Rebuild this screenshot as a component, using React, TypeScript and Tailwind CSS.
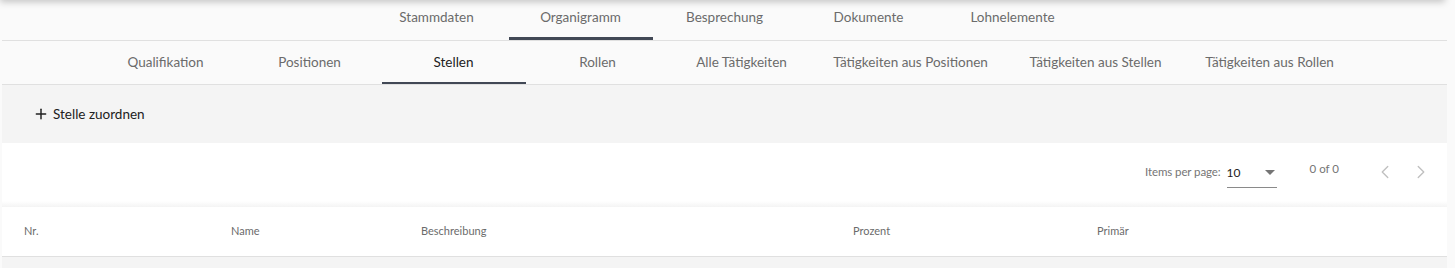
import { ChevronLeft, ChevronRight, Plus } from 'lucide-react'

const topTabs = ['Stammdaten', 'Organigramm', 'Besprechung', 'Dokumente', 'Lohnelemente']
const subTabs = [
  { label: 'Qualifikation', w: 'w-[144px]' },
  { label: 'Positionen', w: 'w-[144px]' },
  { label: 'Stellen', w: 'w-[144px]' },
  { label: 'Rollen', w: 'w-[144px]' },
  { label: 'Alle Tätigkeiten', w: 'w-[144px]' },
  { label: 'Tätigkeiten aus Positionen', w: 'w-[194px]' },
  { label: 'Tätigkeiten aus Stellen', w: 'w-[176px]' },
  { label: 'Tätigkeiten aus Rollen', w: 'w-[172px]' },
]
const columns = [
  { label: 'Nr.', w: 'w-[207px]' },
  { label: 'Name', w: 'w-[190px]' },
  { label: 'Beschreibung', w: 'w-[432px]' },
  { label: 'Prozent', w: 'w-[244px]' },
  { label: 'Primär', w: 'flex-1' },
]

export default function App() {
  return (
    <div
      className="flex flex-col min-h-[268px] bg-[#fafafa] text-[#212121]"
      style={{ fontFamily: 'Lato, "Noto Sans", sans-serif' }}
    >
      {/* header shadow from above */}
      <div className="-mt-4 h-4 w-[1445px] bg-[#fafafa] shadow-[0_2px_7px_rgba(0,0,0,0.22)]" />

      <div className="ml-[2px] w-[1445px] flex flex-col">
        {/* top tabs */}
        <div className="flex justify-center h-[41px] border-b border-[#e0e0e0]">
          {topTabs.map((t) => (
            <div
              key={t}
              className={`w-[144px] flex items-center justify-center pb-[5px] text-[13.5px] text-[#6b6b6b] ${
                t === 'Organigramm' ? 'border-b-[3px] border-[#414855] pt-[3px]' : ''
              }`}
            >
              {t}
            </div>
          ))}
        </div>

        {/* sub tabs */}
        <div className="flex justify-center h-[44px] border-b border-[#e0e0e0]">
          {subTabs.map((t) => (
            <div
              key={t.label}
              className={`${t.w} flex items-center justify-center whitespace-nowrap text-[13.5px] ${
                t.label === 'Stellen'
                  ? 'border-b-2 border-[#414855] pt-[2px] text-[#212121]'
                  : 'text-[#6b6b6b]'
              }`}
            >
              {t.label}
            </div>
          ))}
        </div>

        {/* action bar */}
        <div className="h-[58px] bg-[#f4f4f4] flex items-center pl-[31px]">
          <button className="flex items-center gap-[4px] text-[13.5px] text-[#212121]">
            <Plus size={16} strokeWidth={2.2} className="text-[#212121]" />
            Stelle zuordnen
          </button>
        </div>

        {/* paginator */}
        <div className="h-[58px] bg-white flex items-center justify-end pr-[15px] text-[11.5px] text-[#757575]">
          <span className="mr-[6px] tracking-[-0.1px]">Items per page:</span>
          <div className="w-[50px] h-[30px] flex items-center justify-between border-b border-[#8a8a8a] mt-[1px] mr-[33px]">
            <span className="text-[12px] text-[#212121] pt-[1px]">10</span>
            <span className="w-0 h-0 border-l-[5px] border-r-[5px] border-t-[5px] border-l-transparent border-r-transparent border-t-[#757575] mr-[2px]" />
          </div>
          <span className="mr-[35px] -mt-[6px]">0 of 0</span>
          <div className="flex items-center gap-[14px] text-[#c0c0c0]">
            <ChevronLeft size={22} strokeWidth={1.5} />
            <ChevronRight size={22} strokeWidth={1.5} />
          </div>
        </div>

        <div className="h-[6px] bg-gradient-to-b from-white to-[#f4f4f4]" />

        {/* table header */}
        <div className="h-[50px] bg-white border-b border-[#e0e0e0] flex items-center pl-[22px] text-[11px] text-[#6b6b6b]">
          {columns.map((c) => (
            <div key={c.label} className={c.w}>
              {c.label}
            </div>
          ))}
        </div>

        <div className="h-[12px] bg-[#f4f4f4]" />
      </div>
    </div>
  )
}
